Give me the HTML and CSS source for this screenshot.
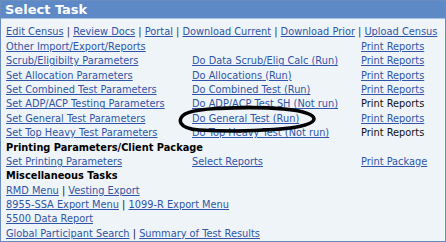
FILE: index.html
```html
<!DOCTYPE html>
<html>
<head>
<meta charset="utf-8">
<link rel="stylesheet" href="styles.css">
</head>
<body>
<div class="panel">
  <div class="title">Select Task</div>
  <div class="content">
    <div class="topline"><a href="#">Edit Census</a> | <a href="#">Review Docs</a> | <a href="#">Portal</a> | <a href="#">Download Current</a> | <a href="#">Download Prior</a> | <a href="#">Upload Census</a></div>
    <div class="grid">
      <a href="#">Other Import/Export/Reports</a><span></span><a href="#">Print Reports</a>
      <a href="#">Scrub/Eligibilty Parameters</a><a href="#">Do Data Scrub/Elig Calc (Run)</a><a href="#">Print Reports</a>
      <a href="#">Set Allocation Parameters</a><a href="#">Do Allocations (Run)</a><a href="#">Print Reports</a>
      <a href="#">Set Combined Test Parameters</a><a href="#">Do Combined Test (Run)</a><a href="#">Print Reports</a>
      <a href="#">Set ADP/ACP Testing Parameters</a><a href="#">Do ADP/ACP Test SH (Not run)</a><span>Print Reports</span>
      <a href="#">Set General Test Parameters</a><span class="circled"><a href="#">Do General Test (Run)</a><svg class="ring" width="142" height="28" viewBox="0 0 142 28"><path d="M44 3.5 C 90 1, 139 4, 139 14 C 139 25, 70 27.5, 24 25 C 3 23.5, 2 14, 10 9 C 20 3.5, 50 2.5, 76 2.5" fill="none" stroke="#000" stroke-width="3.6" stroke-linecap="round"/></svg></span><a href="#">Print Reports</a>
      <a href="#">Set Top Heavy Test Parameters</a><a href="#">Do Top Heavy Test (Not run)</a><span>Print Reports</span>
      <b class="full">Printing Parameters/Client Package</b>
      <a href="#">Set Printing Parameters</a><a href="#">Select Reports</a><a href="#">Print Package</a>
      <b class="full">Miscellaneous Tasks</b>
      <span class="full"><a href="#">RMD Menu</a> | <a href="#">Vesting Export</a></span>
      <span class="full"><a href="#">8955-SSA Export Menu</a> | <a href="#">1099-R Export Menu</a></span>
      <span class="full"><a href="#">5500 Data Report</a></span>
      <span class="full"><a href="#">Global Participant Search</a> | <a href="#">Summary of Test Results</a></span>
    </div>
  </div>
</div>
</body>
</html>
```
FILE: styles.css
```css
html, body {
  margin: 0;
  padding: 0;
  background: #ffffff;
}
body {
  font-family: "DejaVu Sans", Verdana, sans-serif;
  font-size: 9.8px;
  color: #111;
}
.panel {
  width: 444px;
  height: 240px;
  border: 1px solid #6a8cbf;
  background: #eff4f8;
  overflow: hidden;
}
.title {
  background: #5d89c6;
  color: #fff;
  font-weight: bold;
  font-size: 13px;
  height: 17px;
  line-height: 17px;
  padding-left: 4px;
  border-bottom: 1px solid #a8bfdf;
}
.content {
  padding: 5px 0 0 5px;
}
a {
  color: #2f54a8;
  text-decoration: underline;
}
.topline {
  line-height: 16px;
  color: #333;
}
.grid {
  display: grid;
  grid-template-columns: 186px 169px 1fr;
  grid-auto-rows: 14.36px;
  line-height: 14.36px;
}
.grid > span, .grid > b {
  white-space: nowrap;
}
.full {
  grid-column: 1 / -1;
}
b {
  color: #000;
}
.circled {
  position: relative;
}
.ring {
  position: absolute;
  left: -17px;
  top: -7px;
}
```
